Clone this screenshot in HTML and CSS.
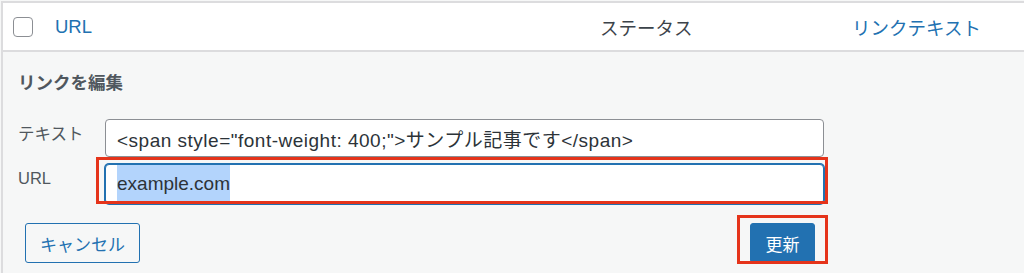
FILE: index.html
```html
<!DOCTYPE html>
<html lang="ja">
<head>
  <meta charset="UTF-8" />
  <meta name="viewport" content="width=device-width, initial-scale=1" />
  <title>リンクを編集</title>
  <link rel="stylesheet" href="styles.css">
</head>
<body>
  <div class="frame">
    <div class="list-head">
      <div class="cell-check"><span class="checkbox"></span></div>
      <div class="cell-url"><a href="#" class="sort-link">URL</a></div>
      <div class="cell-status">ステータス</div>
      <div class="cell-text"><a href="#" class="sort-link">リンクテキスト</a></div>
    </div>

    <div class="edit-panel">
      <h3 class="panel-title">リンクを編集</h3>

      <div class="form-grid">
        <label class="field-label">テキスト</label>
        <div class="field field-text">&lt;span style="font-weight: 400;"&gt;サンプル記事です&lt;/span&gt;</div>

        <label class="field-label">URL</label>
        <div class="field is-focused"><span class="selected">example.com</span></div>
      </div>

      <div class="actions">
        <button class="btn btn-secondary">キャンセル</button>
        <button class="btn btn-primary">更新</button>
      </div>
    </div>
  </div>

  <!-- annotation boxes drawn over the screenshot -->
  <div class="mark mark-url"></div>
  <div class="mark mark-update"></div>
</body>
</html>
```

FILE: styles.css
```css
body {
  margin: 0;
  position: relative;
  font-family: "Liberation Sans", "Noto Sans CJK JP", sans-serif;
  color: #3c434a;
  background: #f6f7f7;
  overflow: hidden;
}
.frame {
  margin: 1px 0 0 1px;
  border-top: 2px solid #dcdcde;
  border-left: 2px solid #dcdcde;
}
.list-head {
  display: grid;
  grid-template-columns: 52px 545px 252px 1fr;
  align-items: center;
  height: 47px;
  background: #fff;
  border-bottom: 2px solid #dcdcde;
  font-size: 18.5px;
}
.cell-check {
  padding-left: 10px;
  display: flex;
}
.checkbox {
  width: 18px;
  height: 18px;
  border: 1.5px solid #8c8f94;
  border-radius: 4px;
  background: #fff;
}
.sort-link {
  color: #2271b1;
  text-decoration: none;
}
.cell-status {
  color: #3c434a;
}
.edit-panel {
  padding: 19px 0 20px 15px;
}
.panel-title {
  margin: 0 0 24px;
  font-size: 17.5px;
  line-height: 24px;
  font-weight: bold;
  color: #50575e;
}
.form-grid {
  display: grid;
  grid-template-columns: 87px 719px;
  row-gap: 6px;
}
.field-label {
  padding-top: 5px;
  font-size: 16.5px;
  line-height: 20px;
  color: #50575e;
}
.field {
  box-sizing: border-box;
  height: 38px;
  padding: 0 11px;
  display: flex;
  align-items: center;
  background: #fff;
  border: 1px solid #8c8f94;
  border-radius: 4px;
  font-size: 19px;
  color: #2c3338;
  white-space: nowrap;
}
.field-text {
  letter-spacing: 0.5px;
}
.field.is-focused {
  border-color: #2271b1;
  box-shadow: 0 0 0 1px #2271b1;
  height: 40px;
  margin-top: 1px;
}
.selected {
  background: #b3d4fc;
  line-height: 38px;
}
.actions {
  width: 790px;
  margin-top: 19px;
  padding: 0 9px 0 7px;
  display: flex;
  justify-content: space-between;
  align-items: center;
}
.btn {
  box-sizing: border-box;
  height: 40px;
  padding: 0 10px;
  font-family: inherit;
  font-size: 17px;
  border-radius: 3px;
  cursor: pointer;
}
.btn-secondary {
  width: 115px;
  background: #f6f7f7;
  color: #2271b1;
  border: 1px solid #2271b1;
}
.btn-primary {
  width: 65px;
  background: #2271b1;
  color: #fff;
  border: 1px solid #2271b1;
}
.mark {
  position: absolute;
  box-sizing: border-box;
  border: 3px solid #e5341b;
}
.mark-url {
  left: 96px;
  top: 157px;
  width: 732px;
  height: 47px;
}
.mark-update {
  left: 737px;
  top: 215px;
  width: 91px;
  height: 49px;
}
```
